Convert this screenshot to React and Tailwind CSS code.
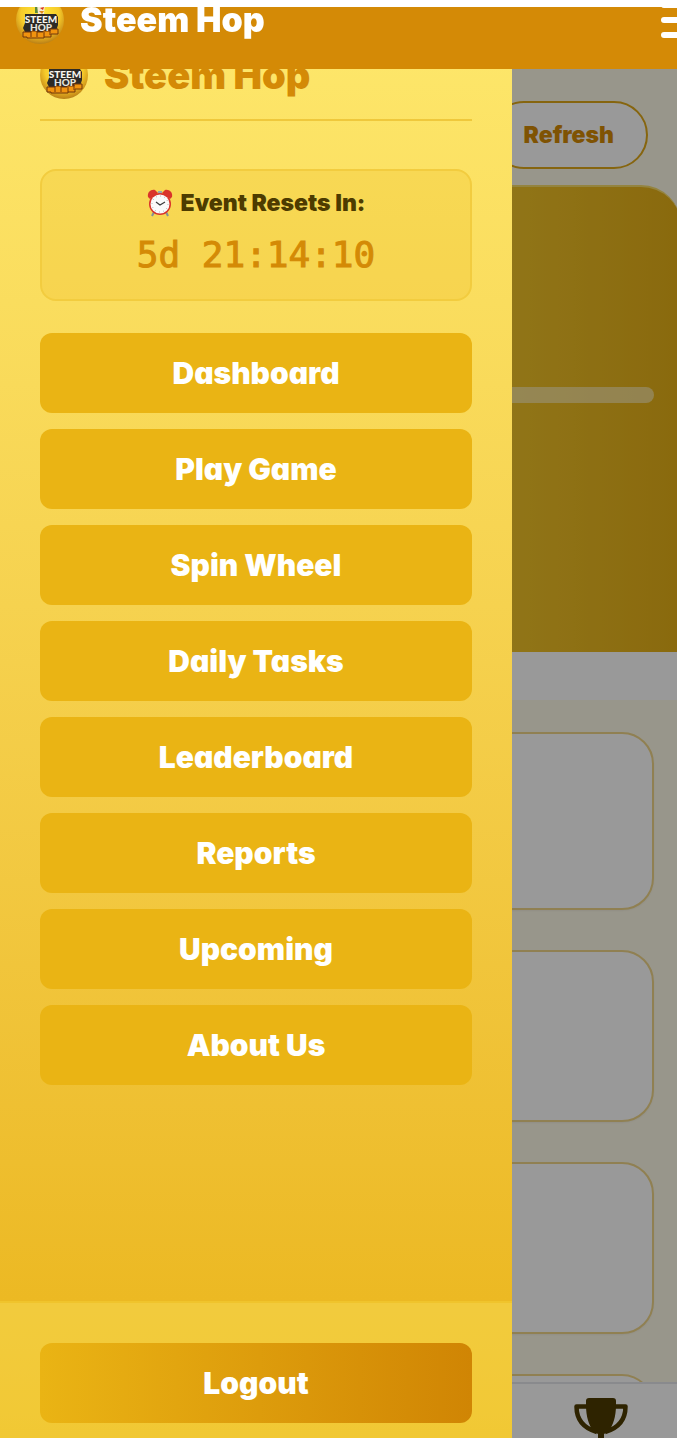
import React, { useState } from "react";

const menuItems = [
  "Dashboard",
  "Play Game",
  "Spin Wheel",
  "Daily Tasks",
  "Leaderboard",
  "Reports",
  "Upcoming",
  "About Us",
];

const Logo = ({ id }) => (
  <svg viewBox="0 0 48 48" className="w-12 h-12 shrink-0" aria-hidden="true">
    <defs>
      <radialGradient id={id} cx="50%" cy="38%" r="66%">
        <stop offset="0%" stopColor="#ffe93a" />
        <stop offset="60%" stopColor="#f6cb2a" />
        <stop offset="85%" stopColor="#cf951a" />
        <stop offset="100%" stopColor="#a87216" />
      </radialGradient>
    </defs>
    <circle cx="24" cy="24" r="24" fill={`url(#${id})`} />
    <path d="M19 9h4l1 8h-5z" fill="#5c8a3a" />
    <path d="M21 8c2-3 6-3 8 0l-1 10h-6z" fill="#f6ead0" />
    <path d="M24 12l4-1-1 3z" fill="#d8321c" />
    <path d="M23 15h5l-2 3z" fill="#e08a1c" />
    <path d="M9 18h31l2 3v8l-1 3-1 4H9l-2-4 2-5z" fill="#2d2a26" />
    <path
      d="M7 36h8v-1h6v1h6v-1h7v-2h8v5h-7v3h-7v1H11v-1H7z"
      fill="#f0930f"
      stroke="#71370b"
      strokeWidth="1"
    />
    <path d="M15 36v5M21 36v5M28 36v5M34 34v5" stroke="#71370b" />
    <text
      x="25"
      y="27"
      textAnchor="middle"
      fontFamily="Lato, sans-serif"
      fontWeight="900"
      fontSize="10"
      fill="#f7f5ef"
    >
      STEEM
    </text>
    <text
      x="25"
      y="35"
      textAnchor="middle"
      fontFamily="Lato, sans-serif"
      fontWeight="900"
      fontSize="10"
      fill="#e6e3dc"
    >
      HOP
    </text>
  </svg>
);

const AlarmClock = () => (
  <svg viewBox="0 0 26 28" className="w-[26px] h-7 shrink-0" aria-hidden="true">
    <path d="M7 23l-2 4M19 23l2 4" stroke="#81909a" strokeWidth="2" />
    <path d="M11 2h4v4h-4z" fill="#9aa5ab" />
    <path d="M1 8C0 3 4 0 8 1l3 3-8 6z" fill="#d9342b" />
    <path d="M25 8c1-5-3-8-7-7l-3 3 8 6z" fill="#d9342b" />
    <circle cx="13" cy="15" r="11" fill="#d9342b" />
    <circle cx="13" cy="15" r="9.5" fill="#fafafa" />
    <circle
      cx="13"
      cy="15"
      r="8"
      fill="none"
      stroke="#9b9b9b"
      strokeWidth="1"
      strokeDasharray="0.8 3.39"
    />
    <path d="M9 13l4 3 5-3" fill="none" stroke="#3b3b3b" strokeWidth="1.2" />
  </svg>
);

const Trophy = () => (
  <svg viewBox="0 0 54 54" className="w-[54px] h-[54px]" aria-hidden="true">
    <path
      d="M14 8.500H2.500C2.500 21 9 30 23 34M40 8.500h11.500C51.500 21 45 30 31 34"
      fill="none"
      stroke="#4d3b00"
      strokeWidth="4.5"
      strokeLinejoin="round"
    />
    <path
      d="M15 0h24a3 3 0 0 1 3 3v4c0 12-3 20-7 26l-5 3v9h6a3 3 0 0 1 3 3v3H15v-3a3 3 0 0 1 3-3h6v-9l-5-3c-4-6-7-14-7-26V3a3 3 0 0 1 3-3z"
      fill="#4d3b00"
    />
  </svg>
);

const App = () => {
  const [open, setOpen] = useState(true);

  return (
    <div className="min-h-screen overflow-hidden bg-[#fefae8] font-['Fredoka_One','Inter',sans-serif] [font-feature-settings:'cv11'] font-black">
      {/* Page content */}
      <main className="pt-[101px]">
        <div className="flex justify-end pr-[29px]">
          <button className="h-[68px] px-8 rounded-full border-2 border-[#e0a91a] bg-white text-[23px] text-[#d48a06]">
            Refresh
          </button>
        </div>

        <section className="mt-4 -mr-1 h-[467px] rounded-t-[40px] border-t-2 border-[#f7dc6a] bg-linear-to-r from-[#fde047] via-[#f1c328] via-75% to-[#e6b016] pt-[200px] pl-6 pr-[27px]">
          <div className="h-4 rounded-full bg-[#fff5cc]/60"></div>
        </section>
        <div className="h-12 bg-white"></div>

        <section className="flex flex-col gap-10 pt-8 pl-6 pr-[23px]">
          <div className="h-[178px] rounded-[32px] border-2 border-[#f0d689] bg-white shadow-xs"></div>
          <div className="h-[172px] rounded-[32px] border-2 border-[#f0d689] bg-white shadow-xs"></div>
          <div className="h-[172px] rounded-[32px] border-2 border-[#f0d689] bg-white shadow-xs"></div>
          <div className="h-16 rounded-t-[32px] border-2 border-b-0 border-[#f0d689] bg-white"></div>
        </section>
      </main>

      {/* Bottom navigation */}
      <nav className="fixed inset-x-0 bottom-0 h-14 border-t-2 border-[#e5e7eb] bg-white flex justify-end pr-[49px] pt-[14px] overflow-hidden">
        <a href="#leaderboard" aria-label="Leaderboard">
          <Trophy />
        </a>
      </nav>

      {open && <div className="fixed inset-0 bg-black/40"></div>}

      {/* Side menu */}
      {open && (
        <aside className="fixed inset-y-0 left-0 w-[512px] flex flex-col bg-linear-to-b from-[#fee86c] to-[#eab414]">
          <div className="flex-1 px-10 pt-[51px]">
            <div className="flex items-center gap-4 h-[70px] pb-[20px] border-b-2 border-[#efc83c]">
              <Logo id="drawer-logo" />
              <h2 className="text-[38px] leading-[48px] text-[#d48a06]">
                Steem Hop
              </h2>
            </div>

            <div className="mt-12 h-[132px] rounded-2xl border-2 border-[#f2cc3f] bg-[#eab414]/20 pt-4 text-center">
              <p className="flex items-center justify-center gap-2 text-[23px] leading-8 text-[#4d3b00]">
                <AlarmClock />
                Event Resets In:
              </p>
              <p className="mt-2 text-4xl leading-[56px] font-['DejaVu_Sans_Mono',monospace] font-normal text-[#d48a06] [-webkit-text-stroke:1px_#d48a06]">
                5d 21:14:10
              </p>
            </div>

            <nav className="mt-8 flex flex-col gap-4">
              {menuItems.map((item) => (
                <button
                  key={item}
                  className="h-20 rounded-xl bg-[#eab414] text-[30px] text-white"
                >
                  {item}
                </button>
              ))}
            </nav>
          </div>

          <div className="border-t-2 border-[#f0c42c] bg-[#ffee70]/35 px-10 pt-10 pb-[15px]">
            <button className="w-full h-20 rounded-xl bg-linear-to-r from-[#eab414] to-[#d08504] text-[30px] text-white">
              Logout
            </button>
          </div>
        </aside>
      )}

      {/* Top bar */}
      <header className="fixed inset-x-0 top-0 border-t-[7px] border-white h-[69px] bg-[#d48a06] overflow-hidden">
        <div className="-mt-[11px] -mr-8 pl-4 flex items-center justify-between">
          <div className="flex items-center gap-4">
            <Logo id="header-logo" />
            <h1 className="text-[34px] leading-[48px] text-white">Steem Hop</h1>
          </div>
          <button
            aria-label="Menu"
            onClick={() => setOpen(!open)}
            className="flex flex-col gap-[9px]"
          >
            <span className="w-12 h-1.5 rounded-full bg-white"></span>
            <span className="w-12 h-1.5 rounded-full bg-white"></span>
            <span className="w-12 h-1.5 rounded-full bg-white"></span>
          </button>
        </div>
      </header>
    </div>
  );
};

export default App;
